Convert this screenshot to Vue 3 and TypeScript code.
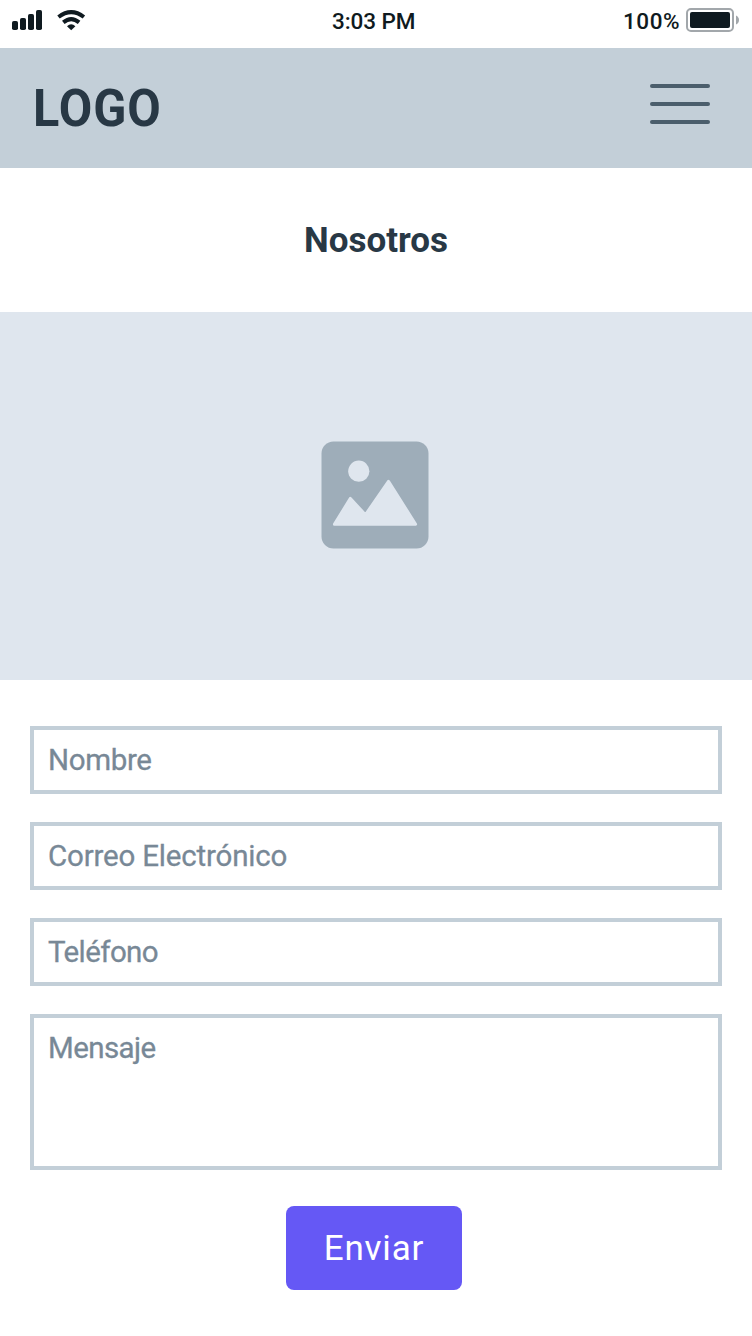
<script setup lang="ts">
import { ref } from 'vue'

interface Field {
  id: string
  label: string
}

const fields: Field[] = [
  { id: 'nombre', label: 'Nombre' },
  { id: 'correo', label: 'Correo Electrónico' },
  { id: 'telefono', label: 'Teléfono' },
]

const values = ref<Record<string, string>>({ nombre: '', correo: '', telefono: '' })
const message = ref('')
</script>

<template>
  <div class="screen">
    <div class="status">
      <div class="signals">
        <svg width="90" height="40" viewBox="0 0 90 40">
          <g fill="#0f1a20">
            <rect x="12" y="21" width="6" height="9" rx="1.8" />
            <rect x="20" y="18" width="6" height="12" rx="1.8" />
            <rect x="28" y="14" width="6" height="16" rx="1.8" />
            <rect x="36" y="10" width="6" height="20" rx="1.8" />
            <path d="M67 26.2Q71.2 22.4 75.4 26.2L71.2 30.2Z" />
          </g>
          <g fill="none" stroke="#0f1a20" stroke-width="4">
            <path d="M58.5 17Q71.2 7.2 83.9 17" />
            <path d="M63.3 22.4Q71.2 15.8 79.1 22.4" />
          </g>
        </svg>
      </div>
      <span class="time">3:03 PM</span>
      <div class="power">
        <span class="percent">100%</span>
        <svg width="54" height="24" viewBox="0 0 54 24">
          <rect x="1" y="1" width="46" height="22" rx="4" fill="#fff" stroke="#a2a7ab" stroke-width="2" />
          <rect x="4" y="4" width="40" height="16" rx="2" fill="#0f1a20" />
          <path d="M50 7.5Q53 9 53 12T50 16.5Z" fill="#a2a7ab" />
        </svg>
      </div>
    </div>

    <header class="header">
      <span class="logo">LOGO</span>
      <button class="menu" type="button" aria-label="Menú">
        <i></i><i></i><i></i>
      </button>
    </header>

    <h1 class="title">Nosotros</h1>

    <div class="hero">
      <svg width="108" height="108" viewBox="321 441 108 108">
        <rect x="321.5" y="441.5" width="107" height="107" rx="12" fill="#9eadb9" />
        <circle cx="358.8" cy="471.2" r="10.6" fill="#dfe6ee" />
        <path
          d="M334.4 524.2L350.4 498.4L365.4 514.8L388.5 481.4L415.6 524.2Z"
          fill="#dfe6ee"
          stroke="#dfe6ee"
          stroke-width="3"
          stroke-linejoin="round"
        />
      </svg>
    </div>

    <form class="form" @submit.prevent>
      <input
        v-for="field in fields"
        :key="field.id"
        v-model="values[field.id]"
        :class="['field', field.id]"
        :placeholder="field.label"
      />
      <textarea v-model="message" class="field message" placeholder="Mensaje"></textarea>
      <button class="send" type="submit">Enviar</button>
    </form>
  </div>
</template>

<style>
body {
  margin: 0;
  background: #fff;
}
</style>

<style scoped>
.screen {
  width: 752px;
  height: 1336px;
  overflow: hidden;
  background: #fff;
  font-family: Roboto, 'Liberation Sans', sans-serif;
  color: #283845;
}
.status {
  display: grid;
  grid-template-columns: 332px auto 1fr;
  height: 48px;
  line-height: 42px;
  font-size: 22.5px;
  font-weight: 500;
  color: #0f1a20;
}
.signals svg {
  display: block;
}
.time {
  letter-spacing: -0.1px;
}
.power {
  display: flex;
  justify-content: flex-end;
  padding-right: 12px;
}
.percent {
  letter-spacing: 0.5px;
  margin-right: 6px;
}
.power svg {
  margin-top: 8px;
}
.header {
  display: flex;
  justify-content: space-between;
  box-sizing: border-box;
  height: 120px;
  padding: 0 42px 0 33px;
  background: #c3cfd8;
}
.logo {
  font-size: 52px;
  line-height: 121px;
  font-weight: 700;
  letter-spacing: 1px;
  transform: scaleX(0.935);
  transform-origin: left;
}
.menu {
  display: flex;
  flex-direction: column;
  gap: 14px;
  width: 60px;
  height: 40px;
  margin: 36px 0 0;
  padding: 0;
  border: 0;
  background: none;
}
.menu i {
  width: 60px;
  height: 4px;
  border-radius: 2px;
  background: #4b5e6c;
}
.title {
  margin: 0;
  height: 144px;
  line-height: 146px;
  text-align: center;
  font-size: 35px;
  font-weight: 700;
}
.hero {
  display: flex;
  justify-content: center;
  box-sizing: border-box;
  height: 368px;
  padding: 129px 2px 0 0;
  background: #dfe6ee;
}
.form {
  display: flex;
  flex-direction: column;
  gap: 28px;
  padding: 46px 30px 0;
}
.field {
  box-sizing: border-box;
  width: 100%;
  height: 68px;
  margin: 0;
  padding: 0 14px;
  border: 4px solid #c3cfd8;
  border-radius: 0;
  outline: none;
  background: #fff;
  color: #283845;
  font: 400 29.5px Roboto, 'Liberation Sans', sans-serif;
  line-height: 60px;
  letter-spacing: -0.35px;
}
.field::placeholder {
  color: #788896;
  opacity: 1;
  -webkit-text-stroke: 0.3px #788896;
}
.correo {
  letter-spacing: -0.18px;
}
.telefono {
  letter-spacing: -0.6px;
}
.message {
  display: block;
  height: 156px;
  resize: none;
  overflow: hidden;
  letter-spacing: -0.6px;
}
.send {
  align-self: center;
  width: 176px;
  height: 84px;
  margin: 8px 4px 0 0;
  padding: 2px 0 0;
  border: 0;
  border-radius: 8px;
  background: #6558f5;
  color: #fff;
  font: 400 35px Roboto, 'Liberation Sans', sans-serif;
  line-height: 82px;
  letter-spacing: 0.8px;
}
</style>
